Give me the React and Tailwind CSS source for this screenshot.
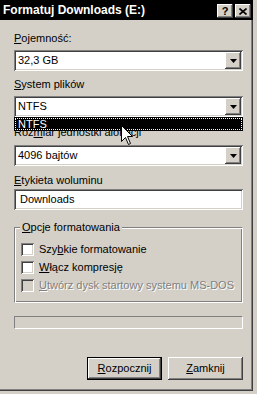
import React from "react";

const raised =
  "shadow-[inset_-1px_-1px_#404040,inset_1px_1px_#ffffff,inset_-2px_-2px_#808080,inset_2px_2px_#d4d0c8]";
const sunken =
  "shadow-[inset_1px_1px_#808080,inset_-1px_-1px_#ffffff,inset_2px_2px_#404040,inset_-2px_-2px_#d4d0c8]";

function Arrow() {
  return (
    <div className={`w-[16px] h-[17px] bg-[#d4d0c8] ${raised} flex items-center justify-center`}>
      <svg width="7" height="4" viewBox="0 0 7 4" className="block">
        <polygon points="0,0 7,0 3.5,4" fill="#000" />
      </svg>
    </div>
  );
}

function Combo({ value }) {
  return (
    <div className={`w-[229px] h-[21px] bg-white ${sunken} flex items-center p-[2px]`}>
      <div className="flex-1 pl-[2px] leading-[13px] text-black">{value}</div>
      <Arrow />
    </div>
  );
}

function Label({ children, className = "" }) {
  return <div className={`h-[13px] leading-[13px] text-black ${className}`}>{children}</div>;
}

function Check({ children, disabled }) {
  return (
    <div className="flex items-center h-[13px]">
      <div className={`w-[13px] h-[13px] ${disabled ? "bg-[#d4d0c8]" : "bg-white"} ${sunken}`} />
      <div
        className={`ml-[5px] leading-[13px] ${
          disabled ? "text-[#808080] [text-shadow:1px_1px_0_#ffffff]" : "text-black"
        }`}
      >
        {children}
      </div>
    </div>
  );
}

export default function App() {
  return (
    <div
      className="w-[257px] h-[394px] bg-[#d4d0c8] relative overflow-hidden text-[11px]"
      style={{ fontFamily: "Tahoma, 'Liberation Sans', Arial, sans-serif" }}
    >
      <div className="w-[253px] h-[391px] bg-[#d4d0c8] shadow-[inset_-1px_-1px_#404040,inset_-2px_-2px_#808080] flex flex-col">
        {/* Title bar */}
        <div className="h-[20px] bg-black flex items-start pl-[3px] pr-[2px] pt-[4px]">
          <div className="flex-1 text-white font-bold text-[12px] leading-[13px] tracking-[0px]">
            Formatuj Downloads (E:)
          </div>
          <div className="flex gap-[2px]">
            <div className={`w-[16px] h-[14px] bg-[#d4d0c8] ${raised} flex items-center justify-center text-black font-bold text-[11px] leading-none`}>
              ?
            </div>
            <div className={`w-[16px] h-[14px] bg-[#d4d0c8] ${raised} flex items-center justify-center`}>
              <svg width="8" height="7" viewBox="0 0 8 7" className="block">
                <path d="M0.5 0.5 L7.5 6.5 M7.5 0.5 L0.5 6.5" stroke="#000" strokeWidth="1.6" />
              </svg>
            </div>
          </div>
        </div>

        {/* Body */}
        <div className="pl-[14px] flex flex-col">
          <Label className="mt-[12px]">
            <u>P</u>ojemność:
          </Label>
          <div className="mt-[5px]">
            <Combo value="32,3 GB" />
          </div>
          <Label className="mt-[7px]">
            <u>S</u>ystem plików
          </Label>
          <div className="mt-[5px]">
            <Combo value="NTFS" />
          </div>
          <Label className="mt-[9px]">
            Roz<u>m</u>iar jednostki alokacji
          </Label>
          <div className="mt-[6px]">
            <Combo value="4096 bajtów" />
          </div>
          <Label className="mt-[8px]">
            <u>E</u>tykieta woluminu
          </Label>
          <div className="mt-[2px]">
            <div className={`w-[229px] h-[21px] bg-white ${sunken} flex items-center px-[6px]`}>
              <span className="leading-[13px] text-black">Downloads</span>
            </div>
          </div>

          {/* Group box */}
          <div className="mt-[11px] w-[229px] relative">
            <div className="h-[76px] mt-[6px] border border-t-[#808080] border-l-[#808080] border-r-[#ffffff] border-b-[#ffffff] shadow-[inset_1px_1px_#ffffff,inset_-1px_-1px_#808080] flex flex-col pl-[6px] pt-[15px] gap-[5px]">
              <Check>
                Szy<u>b</u>kie formatowanie
              </Check>
              <Check>
                <u>W</u>łącz kompresję
              </Check>
              <Check disabled>
                <u>U</u>twórz dysk startowy systemu MS-DOS
              </Check>
            </div>
            <div className="absolute left-[6px] top-0 bg-[#d4d0c8] px-[2px] h-[13px] leading-[13px] text-black">
              <u>O</u>pcje formatowania
            </div>
          </div>

          {/* Progress */}
          <div className="mt-[13px] w-[229px] h-[13px] border border-t-[#808080] border-l-[#808080] border-r-[#ffffff] border-b-[#ffffff]" />

          {/* Buttons */}
          <div className="mt-[28px] w-[229px] flex justify-end gap-[6px]">
            <div className="w-[75px] h-[23px] border border-black">
              <div className={`w-full h-full ${raised} flex items-center justify-center text-black leading-[13px]`}>
                <span>
                  <u>R</u>ozpocznij
                </span>
              </div>
            </div>
            <div className={`w-[75px] h-[23px] ${raised} flex items-center justify-center text-black leading-[13px]`}>
              <span>
                <u>Z</u>amknij
              </span>
            </div>
          </div>
        </div>
      </div>

      {/* Dropdown list overlay */}
      <div className="absolute left-[14px] top-[117px] w-[229px] h-[14px] bg-black p-[1px]">
        <div className="w-full h-full border border-dotted border-white flex items-center pl-[2px]">
          <span className="text-white leading-[11px]">NTFS</span>
        </div>
      </div>

      {/* Mouse cursor */}
      <svg
        className="absolute left-[121px] top-[125px]"
        width="13"
        height="21"
        viewBox="0 0 13 21"
      >
        <polygon
          points="0.5,0.5 0.5,16.5 4.5,12.5 7.5,19.5 9.5,18.5 6.5,11.5 11.5,11.5"
          fill="#ffffff"
          stroke="#000000"
          strokeWidth="1"
        />
      </svg>
    </div>
  );
}
